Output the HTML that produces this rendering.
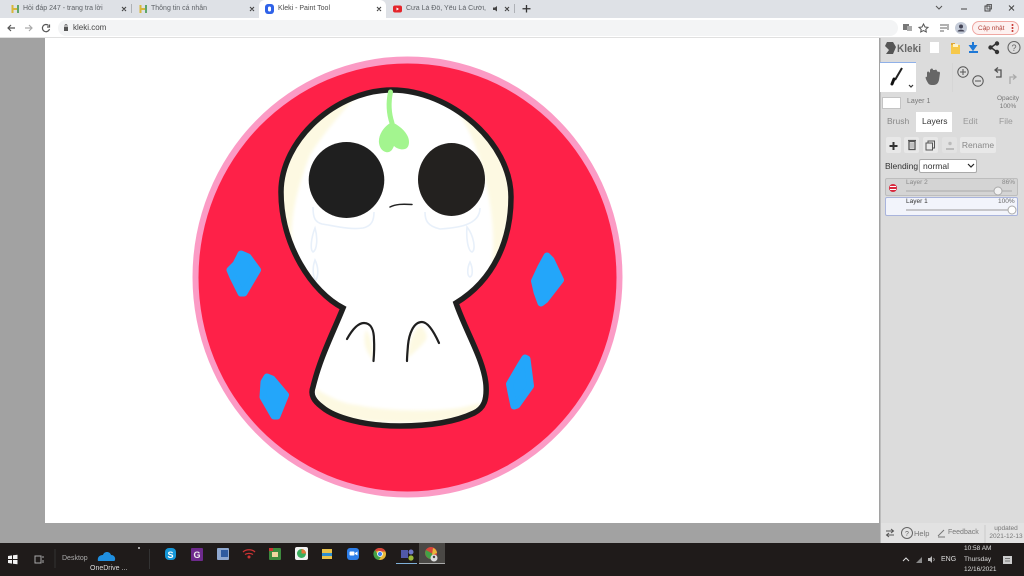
<!DOCTYPE html>
<html><head><meta charset="utf-8"><style>
html,body{margin:0;padding:0;width:1024px;height:576px;overflow:hidden;background:#a2a2a2;font-family:"Liberation Sans","Noto Sans CJK SC",sans-serif}
.a{position:absolute;white-space:nowrap}
svg{position:absolute;left:0;top:0}
</style></head><body>
<div class="a" style="left:0;top:0;width:1024px;height:18px;background:#dee1e6"></div>
<div class="a" style="left:0;top:18px;width:1024px;height:20px;background:#fff"></div>
<div class="a" style="left:58px;top:20px;width:840px;height:16px;background:#f3f4f5;border-radius:8px"></div>
<div class="a" style="left:0;top:37px;width:1024px;height:1px;background:#e0e0e0"></div>
<div class="a" style="left:259px;top:0;width:127px;height:18px;background:#fff;border-radius:6px 6px 0 0"></div>
<div class="a" style="left:23px;top:5px;font-size:7px;color:#5f6368">Hỏi đáp 247 - trang tra lời</div>
<div class="a" style="left:151px;top:5px;font-size:7px;color:#5f6368">Thông tin cá nhân</div>
<div class="a" style="left:278px;top:5px;font-size:7px;color:#4a4a4a">Kleki - Paint Tool</div>
<div class="a" style="left:406px;top:5px;font-size:7px;color:#5f6368;width:82px;overflow:hidden">Cưa Là Đổ, Yêu Là Cưới, Khu</div>
<div class="a" style="left:73px;top:23px;font-size:8px;color:#444">kleki.com</div>
<div class="a" style="left:45px;top:38px;width:834px;height:485px;background:#fff"></div>
<div class="a" style="left:972px;top:21px;width:47px;height:14px;box-sizing:border-box;border:1px solid #efa8a3;border-radius:7px;background:#fdf1f0"></div>
<div class="a" style="left:978px;top:22px;line-height:14px;font-size:6.500px;color:#b3423a">Cập nhật</div>

<div class="a" style="left:880px;top:38px;width:144px;height:505px;background:#dcdcdc;border-left:1px solid #bdbdbd;box-sizing:border-box"></div>
<div class="a" style="left:880px;top:62px;width:36px;height:30px;background:#fff;border-top:1px solid #8fb0e8;box-sizing:border-box"></div>
<div class="a" style="left:882px;top:97px;width:17px;height:10px;background:#fff;border:1px solid #c4c4c4"></div>
<div class="a" style="left:907px;top:98px;font-size:7px;color:#777">Layer 1</div>
<div class="a" style="left:997px;top:95px;font-size:6.500px;color:#777;text-align:center;line-height:7.500px">Opacity<br>100%</div>
<div class="a" style="left:916px;top:112px;width:36px;height:20px;background:#fff"></div>
<div class="a" style="left:887px;top:116px;font-size:8.500px;color:#888">Brush</div>
<div class="a" style="left:922px;top:116px;font-size:8.500px;color:#333">Layers</div>
<div class="a" style="left:963px;top:116px;font-size:8.500px;color:#999">Edit</div>
<div class="a" style="left:999px;top:116px;font-size:8.500px;color:#999">File</div>
<div class="a" style="left:886px;top:137px;width:15px;height:16px;background:#e8e8e8;border-radius:2px"></div>
<div class="a" style="left:904px;top:137px;width:15px;height:16px;background:#e8e8e8;border-radius:2px"></div>
<div class="a" style="left:923px;top:137px;width:15px;height:16px;background:#e8e8e8;border-radius:2px"></div>
<div class="a" style="left:942px;top:137px;width:15px;height:16px;background:#e2e2e2;border-radius:2px"></div>
<div class="a" style="left:960px;top:137px;width:36px;height:16px;background:#e8e8e8;border-radius:2px;font-size:8.500px;color:#888;text-align:center;line-height:16px">Rename</div>
<div class="a" style="left:885px;top:161px;font-size:8.500px;color:#333">Blending</div>
<div class="a" style="left:919px;top:159px;width:56px;height:12px;background:#fff;border:1px solid #aaa;border-radius:2px;font-size:8.500px;color:#333;line-height:12px;text-indent:3px">normal</div>
<div class="a" style="left:885px;top:178px;width:133px;height:18px;box-sizing:border-box;background:#d4d4d4;border:1px solid #bdbdbd;border-radius:2px"></div>
<div class="a" style="left:885px;top:197px;width:133px;height:19px;box-sizing:border-box;background:#f2f4fb;border:1px solid #a9b4dc;border-radius:2px"></div>
<div class="a" style="left:906px;top:179px;font-size:6.500px;color:#888">Layer 2</div>
<div class="a" style="left:1002px;top:179px;font-size:6.500px;color:#888">86%</div>
<div class="a" style="left:906px;top:198px;font-size:6.500px;color:#333">Layer 1</div>
<div class="a" style="left:998px;top:198px;font-size:6.500px;color:#666">100%</div>
<div class="a" style="left:880px;top:523px;width:144px;height:20px;background:#e2e2e2;border-left:1px solid #bdbdbd;box-sizing:border-box"></div>
<div class="a" style="left:914px;top:529px;font-size:7.500px;color:#777">Help</div>
<div class="a" style="left:948px;top:529px;font-size:7px;color:#777">Feedback</div>
<div class="a" style="left:988px;top:525px;width:36px;font-size:6.500px;color:#777;text-align:center;line-height:8px">updated<br>2021-12-13</div>
<div class="a" style="left:0;top:543px;width:1024px;height:33px;background:#1f1b1a"></div>
<div class="a" style="left:419px;top:543px;width:26px;height:21px;background:#4a4845"></div>
<div class="a" style="left:62px;top:555px;font-size:7px;color:#aaa">Desktop</div>
<div class="a" style="left:90px;top:565px;font-size:7px;color:#ddd">OneDrive ...</div>
<div class="a" style="left:964px;top:544px;width:26px;font-size:6.500px;color:#ddd;line-height:10.500px;text-align:center">10:58 AM<br>Thursday<br>12/16/2021</div>
<div class="a" style="left:941px;top:556px;font-size:7px;color:#ddd">ENG</div>

<svg width="1024" height="576" viewBox="0 0 1024 576" fill="none">
<defs>
<filter id="b" x="-20%" y="-20%" width="140%" height="140%"><feGaussianBlur stdDeviation="1.500"/></filter>
<clipPath id="c"><path d="M343 308C312 292 281 245 281 192C281 140 336 90 392 90C450 90 511 142 511 197C511 240 494 280 456 303C466 332 484 360 486 385C487 400 484 408 474 413C455 422 430 426 400 426C365 426 335 418 322 407C314 401 310 395 313 387C320 358 332 335 343 308Z"/></clipPath>
</defs>
<!-- artwork -->
<ellipse cx="407.500" cy="277" rx="215" ry="220.500" fill="#fb9bc5"/>
<ellipse cx="407.500" cy="277.500" rx="209" ry="214" fill="#fe2148"/>
<path d="M343 308C312 292 281 245 281 192C281 140 336 90 392 90C450 90 511 142 511 197C511 240 494 280 456 303C466 332 484 360 486 385C487 400 484 408 474 413C455 422 430 426 400 426C365 426 335 418 322 407C314 401 310 395 313 387C320 358 332 335 343 308Z" fill="#fff"/>
<g clip-path="url(#c)">
<g fill="#fdf9e2" filter="url(#b)">
<path d="M357 95C320 100 284 150 281 190C280 215 286 235 292 248C290 220 296 190 310 155C322 135 340 115 357 95Z"/>
<path d="M455 107C480 120 510 165 510 195C510 225 500 255 490 272C497 245 492 200 480 160C474 140 465 122 455 107Z"/>
<path d="M315 388C330 398 345 404 357 405C380 410 420 412 450 409C462 408 472 405 480 403C480 410 472 415 462 418C430 425 360 425 332 414C322 408 316 400 315 388Z"/>
<path d="M366 330C372 338 373 350 373 360C366 352 362 342 366 330Z"/>
<path d="M420 326C426 330 428 336 426 340C420 348 412 354 408 358C408 345 412 332 420 326Z"/>
</g>
</g>
<path d="M343 308C312 292 281 245 281 192C281 140 336 90 392 90C450 90 511 142 511 197C511 240 494 280 456 303C466 332 484 360 486 385C487 400 484 408 474 413C455 422 430 426 400 426C365 426 335 418 322 407C314 401 310 395 313 387C320 358 332 335 343 308Z" stroke="#1f1f1f" stroke-width="5.500" stroke-linejoin="miter"/>
<path d="M390.500 92C388 104 389 114 392 123" stroke="#a3f58f" stroke-width="5" stroke-linecap="round"/>
<path d="M392 122C384 126 378 135 379 143C380 151 386 153 389 152C392 151 393 148 394 146C397 149 402 150 405 149C409 148 410 142 408 137C405 130 398 125 392 122Z" fill="#a3f58f"/>
<ellipse cx="346.500" cy="180" rx="37.800" ry="38" fill="#1f1f1f"/>
<ellipse cx="451.500" cy="179.500" rx="33.500" ry="36.500" fill="#23211f"/>
<path d="M390 207C396 204 402 204 412 204.500" stroke="#222" stroke-width="1.500" stroke-linecap="round"/>
<g stroke="#e8f0fa" stroke-width="1.600">
<path d="M313 207C313 218 315 222 322 224C335 226 350 230 363 228C372 226 374 220 374 212"/>
<path d="M425 212C425 220 427 226 440 229C455 228 480 226 480 208"/>
<path d="M315 228C311 238 310 250 313 252C317 250 318 238 315 228ZM315 260C312 268 313 278 316 280C319 274 318 266 315 260Z"/>
<path d="M467 227C466 238 468 251 472 252C476 250 474 236 467 227ZM470 262C467 268 467 276 470 277C473 276 473 268 470 262Z"/>
</g>
<path d="M347 339C352 330 358 323 364 323C371 323 374 330 374 340C374.500 348 374 355 373.500 361" stroke="#1f1f1f" stroke-width="2.200" stroke-linecap="round"/>
<path d="M439 343C434 332 428 322 422 322C413 322 409 335 408 345C407.500 352 407 356 407 361" stroke="#1f1f1f" stroke-width="2.200" stroke-linecap="round"/>
<g fill="#23a6fa" stroke="#23a6fa" stroke-width="7" stroke-linejoin="round">
<polygon points="241,254 248,257 257.500,270 244,293 241,293 233,277 230,270 236,264"/>
<polygon points="267,377 272,379 285.500,395 277,416 274,416 263,397 264,382"/>
<polygon points="547,256 551,260 560.500,280 545,300 541,303 537,292 534.500,281 541,267"/>
<polygon points="525,358 527,359 530.500,386 517,405 514,406 511,392 509.500,384 520,366"/>
</g>

<!-- browser chrome -->
<path d="M12.500 5V13M12.500 9H18" stroke="#d8b83a" stroke-width="2"/><path d="M18 5V13" stroke="#5fa66a" stroke-width="2"/>
<path d="M140.500 5V13M140.500 9H146" stroke="#d8b83a" stroke-width="2"/><path d="M146 5V13" stroke="#5fa66a" stroke-width="2"/>
<rect x="265" y="4" width="9" height="10" rx="3" fill="#2f62e8"/><rect x="268" y="6.500" width="3" height="5" rx="1.500" fill="#fff"/>
<rect x="393" y="5.500" width="9" height="7" rx="2" fill="#e4252b"/><path d="M396.500 7.500V10.500L399 9Z" fill="#fff"/>
<g stroke="#444" stroke-width="1.100"><path d="M122 7L126 11M126 7L122 11M250 7L254 11M254 7L250 11M377 7L381 11M381 7L377 11M505 7L509 11M509 7L505 11"/></g>
<path d="M131.500 4V13M514.500 4V13" stroke="#aeb1b6"/>
<path d="M526.500 5V12.500M522.500 8.750H530.500" stroke="#333" stroke-width="1.300"/>
<path d="M493 7.500H495L497 6V11.500L495 10H493Z" fill="#444"/>
<path d="M15 28H8M11 25L8 28L11 31" stroke="#555" stroke-width="1.200"/>
<path d="M25 28H32M29 25L32 28L29 31" stroke="#aaa" stroke-width="1.200"/>
<path d="M48.500 25.500A3.600 3.600 0 1 0 49.500 29M49.500 24.500V27H47" stroke="#555" stroke-width="1.200"/>
<rect x="64" y="27" width="4" height="4" fill="#555"/><path d="M65 27V25.500A1 1 0 0 1 67 25.500V27" stroke="#555" stroke-width=".8"/>
<path d="M936 6L939 9L942 6" stroke="#555"/><path d="M961 9H967" stroke="#444"/>
<rect x="985" y="6" width="5" height="5" stroke="#444"/><rect x="987" y="4.500" width="4.500" height="4.500" stroke="#444" stroke-width=".8"/>
<path d="M1009 5.500L1014 10.500M1014 5.500L1009 10.500" stroke="#444"/>
<rect x="903" y="24" width="6" height="6" fill="#777"/><rect x="907" y="26" width="5" height="5" fill="#aaa"/>
<path d="M923.500 24L925 27L928 27.400L925.800 29.400L926.300 32L923.500 30.600L920.700 32L921.200 29.400L919 27.400L922 27Z" stroke="#555"/>
<path d="M940 25H947M940 28H947M940 31H944M948 24V30" stroke="#666"/>
<circle cx="961" cy="28" r="6" fill="#c4cbd8"/><circle cx="961" cy="26.500" r="2" fill="#445"/><path d="M957.500 31.500C958 29 964 29 964.500 31.500Z" fill="#445"/>
<circle cx="1012.500" cy="25" r="1" fill="#c5302a"/><circle cx="1012.500" cy="28" r="1" fill="#c5302a"/><circle cx="1012.500" cy="31" r="1" fill="#c5302a"/>

<!-- kleki toolbar -->
<text x="897" y="52" font-size="11" font-weight="bold" fill="#666" font-family="Liberation Sans" textLength="24" lengthAdjust="spacingAndGlyphs">Kleki</text>
<path d="M887 42H893L896 47L893 54H886L889 50L885 46Z" fill="#555"/>
<rect x="930" y="42" width="9" height="11" fill="#fff"/>
<path d="M951 45H960V54H951Z" fill="#f6c84a"/><path d="M951 43H955V45H951Z" fill="#e0a93a"/><rect x="953" y="44" width="5" height="3" fill="#fff3c8"/>
<path d="M973 42V47M970.500 46L973 49.500L975.500 46Z" stroke="#1e78d6" stroke-width="2" fill="#1e78d6"/><path d="M969 52H978" stroke="#1e78d6" stroke-width="2"/>
<path d="M997 43L991 47.500L997 52" stroke="#333" stroke-width="1.500"/><circle cx="997" cy="43.500" r="2.200" fill="#333"/><circle cx="990.500" cy="47.500" r="2.200" fill="#333"/><circle cx="997" cy="52" r="2.200" fill="#333"/>
<circle cx="1014" cy="47.500" r="6" stroke="#666" stroke-width="1.100"/><text x="1011.500" y="51" font-size="9" fill="#666" font-family="Liberation Sans">?</text>
<path d="M902 68L895 80" stroke="#222" stroke-width="2"/><path d="M894 79L892 84" stroke="#111" stroke-width="3" stroke-linecap="round"/>
<path d="M909 85L911 87L913 85" stroke="#333" stroke-width="1.200"/>
<path d="M928 83C925 78 925 76 927 77L927 73C927 71 929 71 930 73L930 70C931 68 933 68 933 70L935 70C936 69 937 70 937 71L938 72C939 71 940 72 940 73L939 80C938 84 936 85 933 85C931 85 929 85 928 83Z" fill="#666"/>
<circle cx="963" cy="72" r="5.200" stroke="#555"/><path d="M963 69V75M960 72H966" stroke="#555"/>
<circle cx="978" cy="81" r="5.200" stroke="#555"/><path d="M975 81H981" stroke="#555"/>
<path d="M996 70H1001V77H996M998 67.500L995 70L998 72.500" stroke="#555" stroke-width="1.300"/>
<path d="M1015 77H1010V84M1013 74.500L1016 77L1013 79.500" stroke="#aaa" stroke-width="1.300"/>
<path d="M952.500 63V92" stroke="#d6d6d6"/>
<path d="M893.500 142V150M889.500 146H897.500" stroke="#333" stroke-width="2"/>
<rect x="909" y="141.500" width="6" height="8" fill="none" stroke="#555" stroke-width="1.300"/><path d="M908 140.500H916" stroke="#555" stroke-width="1.200"/><path d="M911 143V148M913 143V148" stroke="#777" stroke-width=".7"/>
<rect x="928" y="141" width="6.500" height="7" stroke="#555"/><rect x="926" y="143" width="6.500" height="7" stroke="#555" fill="#e8e8e8"/>
<circle cx="950" cy="143.500" r="1.700" fill="#bbb"/><path d="M946 150H954V148H946Z" fill="#bbb"/>
<path d="M968 164L971 167L974 164" stroke="#222" stroke-width="1.200"/>
<circle cx="893" cy="188" r="4" fill="#d8283d"/><rect x="890" y="186" width="6" height="1" fill="#fff"/><rect x="890" y="189" width="6" height="1" fill="#fff"/>
<rect x="906" y="190.500" width="106" height="1" fill="#aaa"/><circle cx="998" cy="191" r="4" fill="#f1f1f1" stroke="#aaa"/>
<rect x="906" y="209.500" width="106" height="1" fill="#999"/><circle cx="1012" cy="210" r="4" fill="#fff" stroke="#aaa"/>
<path d="M886 531H893M891 529L893.500 531L891 533M894 535H887M889 533L886.500 535L889 537" stroke="#555"/>
<circle cx="907" cy="533" r="5.500" stroke="#666"/><text x="905" y="536" font-size="7" fill="#666" font-family="Liberation Sans">?</text>
<path d="M938 536L944 530M938 537H945" stroke="#777"/>
<path d="M985 525V543" stroke="#c9c9c9"/>

<!-- taskbar -->
<path d="M8 556L12 555.400V559H8ZM13 555.300L17.500 554.700V559H13ZM8 560H12V563.600L8 563ZM13 560H17.500V564.300L13 563.700Z" fill="#f2f2f2"/>
<rect x="35" y="556" width="6" height="7" stroke="#aaa"/><path d="M43 556V558M43 560V563" stroke="#aaa"/>
<path d="M55 549V568M149.500 549V569" stroke="#333" stroke-width="1"/>
<path d="M98 561C97 556 101 555 103 555C104 551 110 551 111 555C115 555 116 559 114.500 561Z" fill="#1f8fe0"/>
<circle cx="139" cy="548" r="1" fill="#ccc"/>
<rect x="165" y="548" width="11" height="12" rx="4" fill="#1597d8"/><text x="167.500" y="558" font-size="9" font-weight="bold" fill="#fff" font-family="Liberation Sans">S</text>
<rect x="191" y="548" width="12" height="13" rx="1" fill="#6d2a8c"/><text x="193.500" y="558" font-size="9" font-weight="bold" fill="#eee" font-family="Liberation Sans">G</text>
<rect x="217" y="548" width="12" height="12" rx="1" fill="#8fa8d0"/><rect x="221" y="550" width="7" height="7" fill="#2f5ba0"/>
<path d="M243 552C246 549 252 549 255 552M245 554.500C247 553 251 553 253 554.500" stroke="#c33" stroke-width="1.300"/><circle cx="249" cy="557" r="1.500" fill="#c33"/>
<rect x="269" y="548" width="12" height="12" rx="1" fill="#3d8a3e"/><rect x="272" y="552" width="6" height="5" fill="#f1d6a0"/><rect x="269" y="548" width="4" height="3" fill="#c33"/>
<rect x="295" y="547" width="13" height="13" rx="2" fill="#f2f2f2"/><circle cx="301.500" cy="553.500" r="4.500" fill="#3bae5d"/><path d="M301.500 549A4.500 4.500 0 0 1 306 553.500H301.500Z" fill="#e8793a"/>
<path d="M322 549H332V559H322Z" fill="#e8c24a"/><rect x="322" y="553" width="10" height="3" fill="#2d8ed0"/>
<rect x="347" y="548" width="12" height="12" rx="3" fill="#2d7ee8"/><rect x="349.500" y="551.500" width="5" height="4" rx="1" fill="#fff"/><path d="M355 553L357.500 551.500V555.500L355 554Z" fill="#fff"/>
<circle cx="380" cy="554" r="6" fill="#e8b93a"/><path d="M380 548A6 6 0 0 1 385.500 551.500H380A2.500 2.500 0 0 0 376 552L375 550A6 6 0 0 1 380 548Z" fill="#d8453a"/><path d="M375 550A6 6 0 0 0 379 560L382 555H378Z" fill="#43a047"/><circle cx="380" cy="554" r="2.500" fill="#4285f4" stroke="#fff" stroke-width=".8"/>
<rect x="401" y="550" width="7" height="8" fill="#5059a8"/><circle cx="411" cy="552" r="2.500" fill="#7078c8"/><circle cx="411" cy="558" r="2.600" fill="#9ab93a"/>
<rect x="396" y="563" width="21" height="1" fill="#7fb0d8"/>
<circle cx="431" cy="553" r="6" fill="#d8453a"/><path d="M426 550A6 6 0 0 0 431 559L433 554Z" fill="#43a047"/><path d="M433 548A6 6 0 0 1 437 553L432 555Z" fill="#e8b93a"/><circle cx="434" cy="558" r="3.500" fill="#ddd"/><circle cx="434" cy="557" r="1.200" fill="#444"/>
<rect x="419" y="563" width="26" height="1" fill="#aaa"/>
<path d="M903 561L906 558L909 561" stroke="#ddd"/>
<path d="M916 563L922 557V563Z" fill="#888"/><path d="M928 558H930L932 556V563L930 561H928Z" fill="#bbb"/><path d="M933.500 558C934.500 559 934.500 560 933.500 561" stroke="#bbb" stroke-width=".7"/>
<path d="M1003 556H1012V564H1003Z" fill="#ccc"/><path d="M1005 558.500H1010M1005 561H1010" stroke="#777"/>
</svg>
</body></html>
